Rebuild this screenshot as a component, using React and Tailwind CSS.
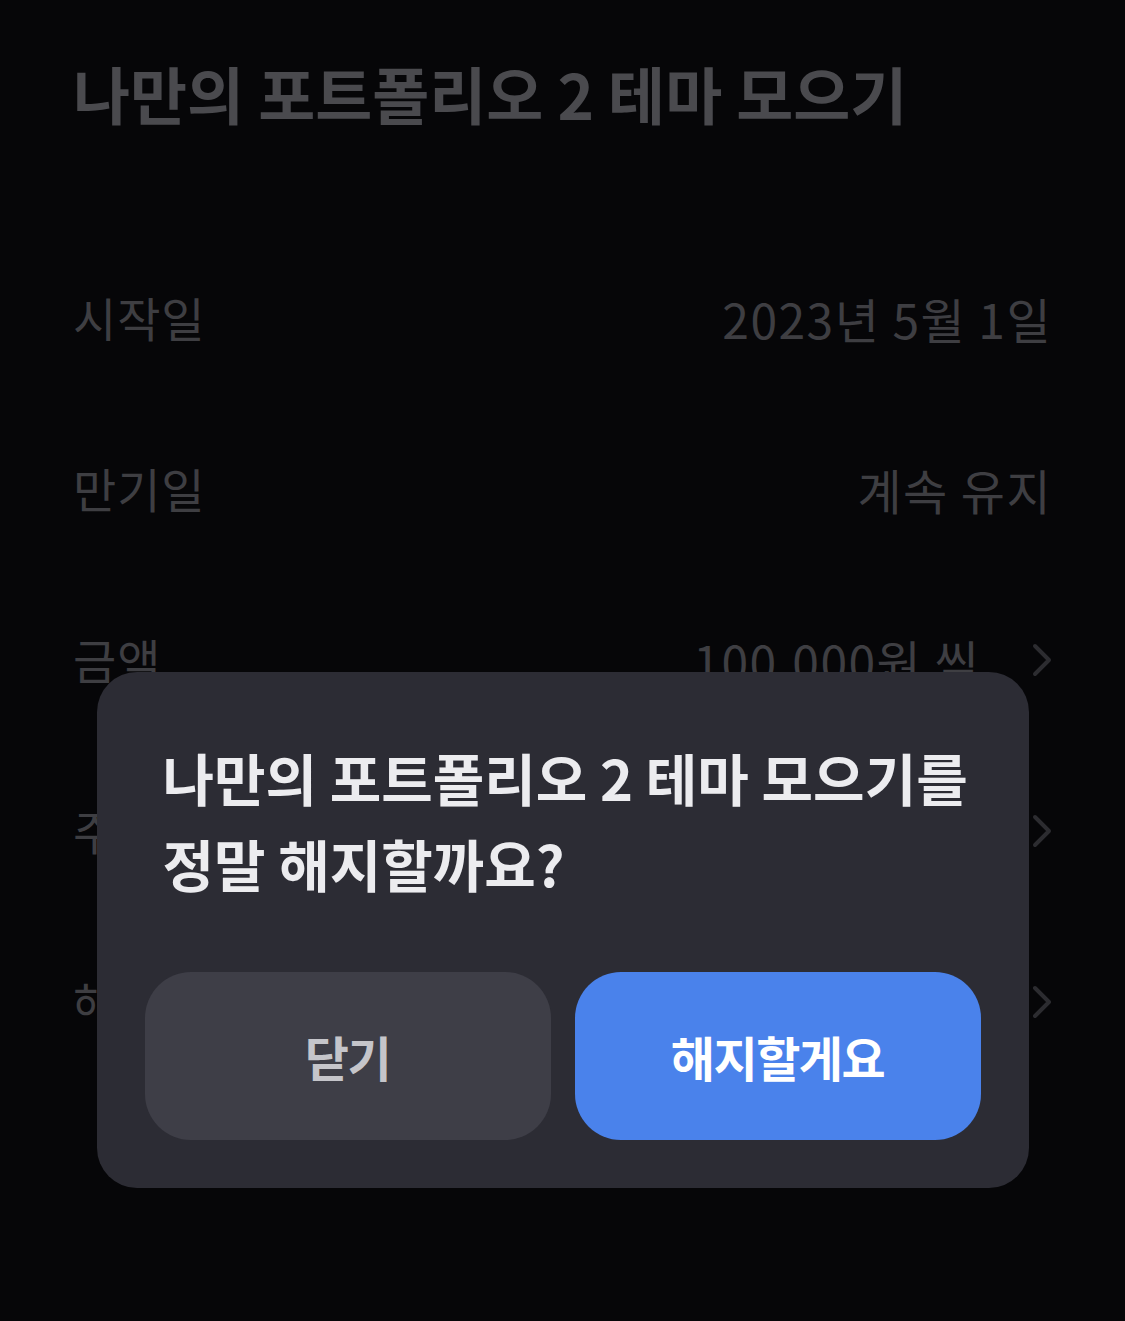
import React from 'react'

const ROWS = [
  { label: '시작일', value: '2023년 5월 1일' },
  { label: '만기일', value: '계속 유지' },
  { label: '금액', value: '100,000원 씩', arrow: true },
  { label: '주기', value: '매주 월요일', arrow: true },
  { label: '해지하기', value: '', arrow: true },
]

const FONT = { fontFamily: '"Noto Sans CJK KR", "Noto Sans", sans-serif' }

export default function App() {
  return (
    <div className="relative w-[1125px] h-[1321px] overflow-hidden bg-[#060608]" style={FONT}>
      {/* Page */}
      <div className="pl-[73px] pr-[73px]">
        <h1 className="mt-[57px] text-[62px] leading-[72px] font-bold tracking-normal text-[#4a4a4e] whitespace-nowrap">
          나만의 포트폴리오 2 테마 모으기
        </h1>

        <div className="mt-[103px]">
          {ROWS.map((row) => (
            <Row key={row.label} {...row} />
          ))}
        </div>
      </div>

      {/* Dialog */}
      <div className="absolute inset-0 flex items-end justify-center pb-[133px]">
        <div className="w-[932px] rounded-[40px] bg-[#2c2c34] pt-[62px] pb-[48px] px-[48px]">
          <p className="pl-[18px] text-[56px] leading-[86px] font-bold tracking-normal text-[#ececef] whitespace-nowrap">
            나만의 포트폴리오 2 테마 모으기를
            <br />
            정말 해지할까요?
          </p>

          <div className="mt-[66px] flex gap-[24px]">
            <button className="flex-1 h-[168px] rounded-[46px] bg-[#3e3e47] text-[48px] font-semibold tracking-[-0.03em] text-[#c5c5ca]">
              닫기
            </button>
            <button className="flex-1 h-[168px] rounded-[46px] bg-[#4a82eb] text-[48px] font-semibold tracking-[-0.03em] text-white">
              해지할게요
            </button>
          </div>
        </div>
      </div>
    </div>
  )
}

function Row({ label, value, arrow }) {
  return (
    <div className="h-[171px] flex items-center justify-between">
      <span className="text-[47px] tracking-[0.02em] text-[#3e3e42]">{label}</span>
      <div className="flex items-center gap-[52px]">
        <span className="text-[48px] tracking-[0.03em] text-[#3e3e42] whitespace-nowrap">{value}</span>
        {arrow && (
          <svg width="20" height="34" viewBox="0 0 20 34" fill="none">
            <path d="M3 3 L17 17 L3 31" stroke="#2c2c30" strokeWidth="4" strokeLinecap="round" strokeLinejoin="round" />
          </svg>
        )}
      </div>
    </div>
  )
}
